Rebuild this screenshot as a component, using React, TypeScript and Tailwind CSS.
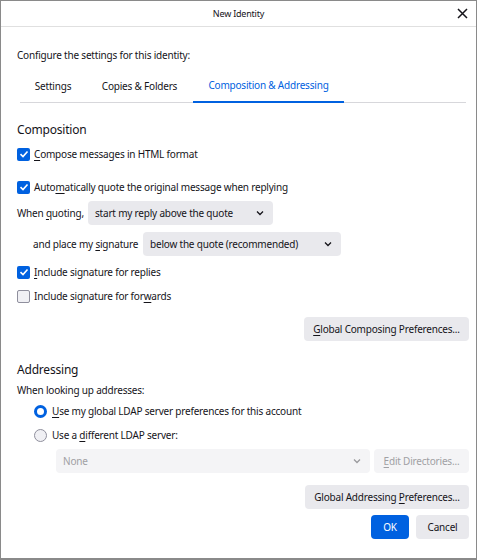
import React from "react";

function Check({ checked }: { checked: boolean }) {
  if (!checked) {
    return <span className="h-[13px] w-[13px] shrink-0 rounded-[2px] border border-[#8f8f9d] bg-[#f0f0f4]" />;
  }
  return (
    <span className="flex h-[13px] w-[13px] shrink-0 items-center justify-center rounded-[2px] bg-[#0061e0]">
      <svg width="10" height="10" viewBox="0 0 10 10">
        <path d="M1.5 5.2 L4 7.5 L8.5 2.5" fill="none" stroke="white" strokeWidth="1.6" />
      </svg>
    </span>
  );
}

function Radio({ checked }: { checked: boolean }) {
  if (checked) {
    return <span className="h-[13px] w-[13px] shrink-0 rounded-full border-[3px] border-[#0061e0] bg-white" />;
  }
  return <span className="h-[13px] w-[13px] shrink-0 rounded-full border border-[#8f8f9d] bg-[#f0f0f4]" />;
}

function Chevron({ color = "#15141a" }: { color?: string }) {
  return (
    <svg width="8" height="6" viewBox="0 0 8 6">
      <path d="M1 1.5 L4 4.5 L7 1.5" fill="none" stroke={color} strokeWidth="1.3" />
    </svg>
  );
}

function Select({ label, className, disabled }: { label: string; className: string; disabled?: boolean }) {
  return (
    <div
      className={`flex h-[24px] items-center justify-between rounded-[4px] pl-[7px] pr-[9px] ${
        disabled ? "bg-[#f4f4f6] text-[#a0a0a4]" : "bg-[#e9e9ed]"
      } ${className}`}
    >
      <span>{label}</span>
      <Chevron color={disabled ? "#9a9a9e" : "#15141a"} />
    </div>
  );
}

function U({ children }: { children: React.ReactNode }) {
  return <span className="underline underline-offset-2">{children}</span>;
}

export default function App() {
  return (
    <div className="flex h-[560px] w-[477px] flex-col border-x border-t border-b-2 border-[#8a8a8a] bg-white font-['Noto_Sans',sans-serif] text-[10px] tracking-[-0.2px] text-[#15141a]">
      <div className="relative flex h-[26px] shrink-0 items-center justify-center border-b border-[#e0e0e0]">
        <span className="text-[9px]">New Identity</span>
        <svg className="absolute right-[8px] top-[7px]" width="11" height="11" viewBox="0 0 11 11">
          <path d="M1 1 L10 10 M10 1 L1 10" stroke="#15141a" strokeWidth="1.5" />
        </svg>
      </div>

      <div className="flex flex-1 flex-col pl-[16px] pr-[7px] whitespace-nowrap">
        <div className="mt-[20px] h-[16px] leading-[16px]">Configure the settings for this identity:</div>

        <div className="ml-[3px] mr-[3px] mt-[7px] flex border-b border-[#d7d7db]">
          <div className="flex h-[32px] w-[66px] items-center justify-center">Settings</div>
          <div className="flex h-[32px] w-[107px] items-center justify-center">Copies &amp; Folders</div>
          <div className="-mb-px flex h-[33px] w-[151px] items-center justify-center border-b-2 border-[#0061e0] pb-[1px] text-[#0061e0]">
            Composition &amp; Addressing
          </div>
        </div>

        <div className="mt-[18px] h-[18px] text-[12px] leading-[18px]">Composition</div>

        <div className="mt-[6px] flex h-[18px] items-center gap-[4px]">
          <Check checked />
          <span>
            <U>C</U>ompose messages in HTML format
          </span>
        </div>

        <div className="mt-[15px] flex h-[18px] items-center gap-[4px]">
          <Check checked />
          <span>
            Auto<U>m</U>atically quote the original message when replying
          </span>
        </div>

        <div className="mt-[5px] flex h-[24px] items-center">
          <span className="w-[71px]">
            When <U>q</U>uoting,
          </span>
          <Select label="start my reply above the quote" className="w-[185px]" />
        </div>

        <div className="mt-[7px] flex h-[24px] items-center pl-[16px]">
          <span className="w-[110px]">
            and place my <U>s</U>ignature
          </span>
          <Select label="below the quote (recommended)" className="w-[198px]" />
        </div>

        <div className="mt-[7px] flex h-[18px] items-center gap-[4px]">
          <Check checked />
          <span>
            <U>I</U>nclude signature for replies
          </span>
        </div>

        <div className="mt-[6px] flex h-[18px] items-center gap-[4px]">
          <Check checked={false} />
          <span>
            Include signature for for<U>w</U>ards
          </span>
        </div>

        <div className="mt-[12px] flex justify-end">
          <div className="flex h-[24px] w-[165px] items-center justify-center rounded-[4px] bg-[#e9e9ed]">
            <span>
              <U>G</U>lobal Composing Preferences...
            </span>
          </div>
        </div>

        <div className="mt-[20px] h-[18px] text-[12px] leading-[18px]">Addressing</div>

        <div className="mt-[3px] h-[16px] leading-[16px]">When looking up addresses:</div>

        <div className="mt-[3px] flex h-[20px] items-center gap-[5px] pl-[17px]">
          <Radio checked />
          <span>
            <U>U</U>se my global LDAP server preferences for this account
          </span>
        </div>

        <div className="mt-[4px] flex h-[20px] items-center gap-[5px] pl-[17px]">
          <Radio checked={false} />
          <span>
            Use a <U>d</U>ifferent LDAP server:
          </span>
        </div>

        <div className="mt-[4px] flex gap-[4px] pl-[39px]">
          <Select label="None" className="w-[314px]" disabled />
          <div className="flex h-[24px] flex-1 items-center justify-center rounded-[4px] bg-[#f4f4f6] text-[#a0a0a4]">
            <span>
              <U>E</U>dit Directories...
            </span>
          </div>
        </div>

        <div className="mt-[12px] flex justify-end">
          <div className="flex h-[24px] w-[164px] items-center justify-center rounded-[4px] bg-[#e9e9ed]">
            <span>
              Global Addressing <U>P</U>references...
            </span>
          </div>
        </div>

        <div className="mt-[6px] flex justify-end gap-[7px]">
          <div className="flex h-[24px] w-[38px] items-center justify-center rounded-[4px] bg-[#0061e0] text-white">OK</div>
          <div className="flex h-[24px] w-[53px] items-center justify-center rounded-[4px] bg-[#e9e9ed]">Cancel</div>
        </div>
      </div>
    </div>
  );
}
